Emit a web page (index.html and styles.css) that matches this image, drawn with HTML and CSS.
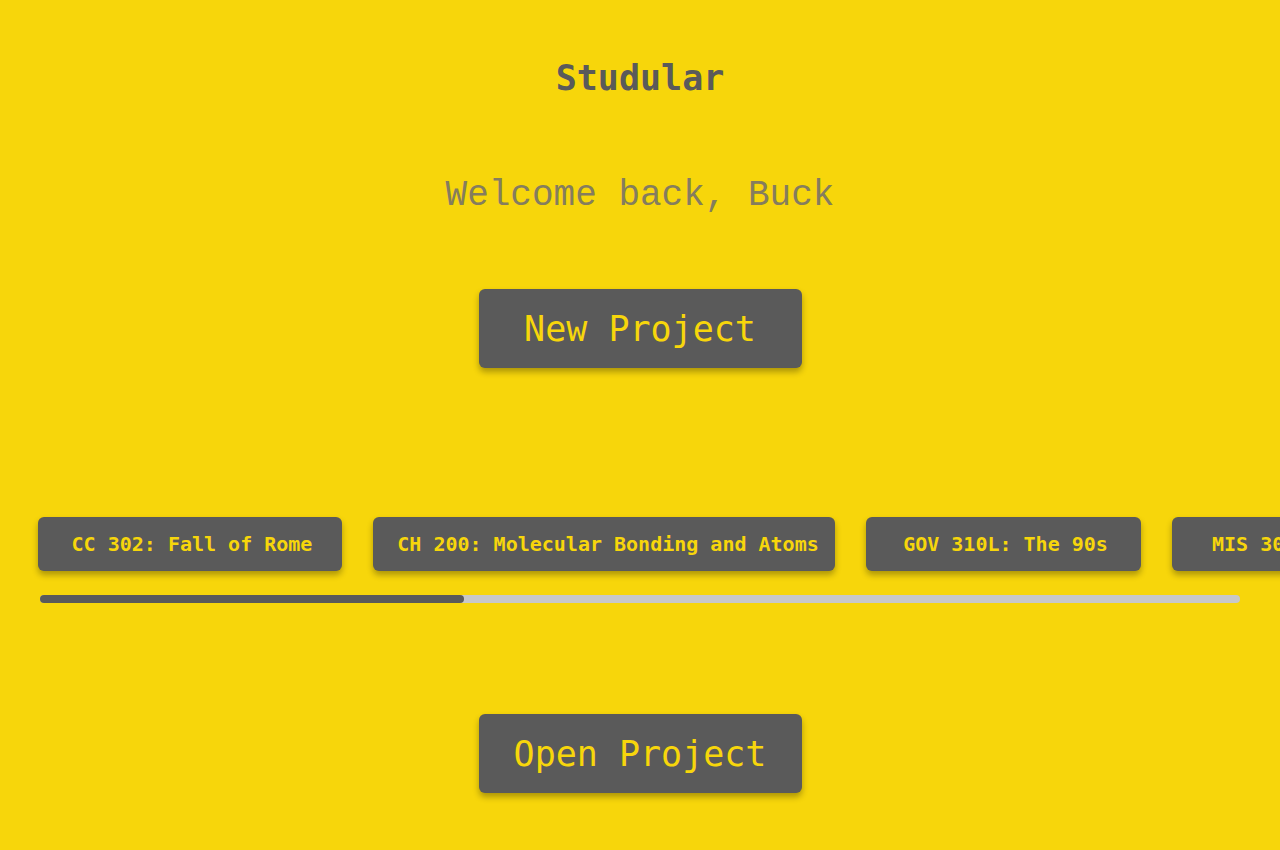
FILE: index.html
```html
<!DOCTYPE html>
<html lang="en">
<head>
<meta charset="utf-8">
<title>Studular</title>
<link rel="stylesheet" href="styles.css">
</head>
<body>
<main class="page">
  <h1 class="brand">Studular</h1>
  <p class="welcome">Welcome back, Buck</p>
  <button class="big-btn btn-new">New Project</button>
  <div class="projects">
    <div class="card card-1">CC 302: Fall of Rome</div>
    <div class="card card-2">CH 200: Molecular Bonding and Atoms</div>
    <div class="card card-3">GOV 310L: The 90s</div>
    <div class="card card-4">MIS 301: Intro to Information Systems</div>
    <div class="card card-5">M 408C: Differential Calculus</div>
    <div class="card card-6">E 316L: British Literature</div>
  </div>
  <div class="track"><div class="thumb"></div></div>
  <button class="big-btn btn-open">Open Project</button>
</main>
</body>
</html>
```
FILE: styles.css
```css
html, body {
  margin: 0;
  padding: 0;
}
body {
  background: #f7d60b;
  height: 850px;
  overflow: hidden;
  font-family: "DejaVu Sans Mono", "Liberation Mono", monospace;
}
.page {
  display: flex;
  flex-direction: column;
  align-items: center;
}
.brand {
  margin: 56px 0 0;
  font-size: 35px;
  line-height: 44px;
  font-weight: 700;
  color: #5a5a5a;
}
.welcome {
  margin: 74px 0 0;
  font-family: "Liberation Mono", "DejaVu Sans Mono", monospace;
  font-size: 36px;
  line-height: 44px;
  font-weight: 400;
  color: #857d5e;
}
.big-btn {
  width: 323px;
  height: 79px;
  border: none;
  border-radius: 6px;
  background: #5a5a5a;
  color: #f7d60b;
  font-family: "DejaVu Sans Mono", "Liberation Mono", monospace;
  font-size: 35px;
  box-shadow: 0 4px 6px rgba(0, 0, 0, 0.3);
  padding: 0;
}
.btn-new {
  margin-top: 71px;
}
.projects {
  align-self: stretch;
  display: flex;
  gap: 31px;
  padding: 10px 0 24px 38px;
  margin-top: 139px;
  overflow: hidden;
}
.card {
  flex: none;
  height: 54px;
  line-height: 54px;
  box-sizing: border-box;
  padding-left: 4px;
  text-align: center;
  white-space: nowrap;
  background: #5a5a5a;
  color: #f7d60b;
  border-radius: 6px;
  font-size: 20px;
  font-weight: 700;
  box-shadow: 0 4px 6px rgba(0, 0, 0, 0.3);
}
.card-1 { width: 304px; }
.card-2 { width: 462px; padding-left: 8px; }
.card-3 { width: 275px; }
.card-4 { width: 500px; padding-left: 0; text-align: left; text-indent: 40px; }
.card-5 { width: 420px; }
.card-6 { width: 380px; }
.track {
  align-self: stretch;
  margin: 0 40px;
  height: 8px;
  border-radius: 4px;
  background: #c8c8c8;
}
.thumb {
  width: 424px;
  height: 8px;
  border-radius: 4px;
  background: #5a5a5a;
}
.btn-open {
  margin-top: 111px;
}
```
